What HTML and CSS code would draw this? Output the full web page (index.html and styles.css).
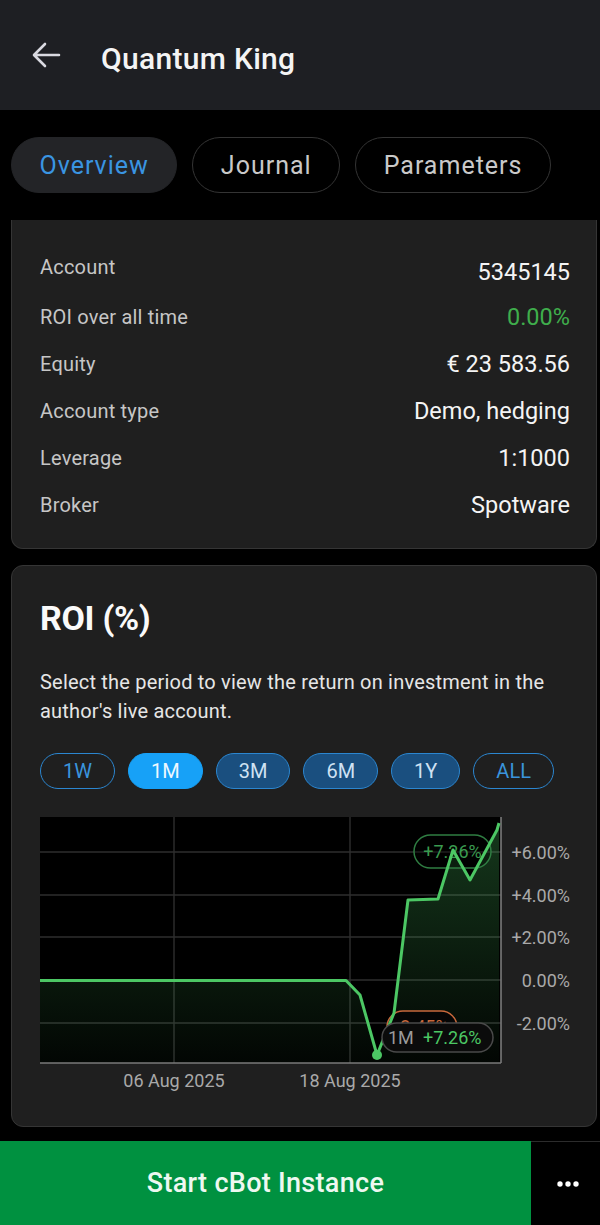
FILE: index.html
```html
<!DOCTYPE html>
<html lang="en">
<head>
    <meta charset="UTF-8">
    <meta name="viewport" content="width=device-width, initial-scale=1.0">
    <title>Quantum King</title>
    <link rel="stylesheet" href="styles.css">
</head>
<body>
    <div class="app">
        <header class="topbar">
            <svg class="back" width="30" height="30" viewBox="0 0 30 30">
                <path d="M28 15H4M14 4L3 15l11 11" fill="none" stroke="#d9d9e0" stroke-width="2.6" stroke-linecap="round" stroke-linejoin="round"/>
            </svg>
            <h1>Quantum King</h1>
        </header>

        <nav class="tabs">
            <span class="tab active">Overview</span>
            <span class="tab">Journal</span>
            <span class="tab">Parameters</span>
        </nav>

        <main class="content">
            <section class="card info">
                <div class="row first">
                    <span class="label">Account</span>
                    <span class="value">5345145</span>
                </div>
                <div class="row">
                    <span class="label">ROI over all time</span>
                    <span class="value green">0.00%</span>
                </div>
                <div class="row">
                    <span class="label">Equity</span>
                    <span class="value">€ 23 583.56</span>
                </div>
                <div class="row">
                    <span class="label">Account type</span>
                    <span class="value">Demo, hedging</span>
                </div>
                <div class="row">
                    <span class="label">Leverage</span>
                    <span class="value">1:1000</span>
                </div>
                <div class="row">
                    <span class="label">Broker</span>
                    <span class="value">Spotware</span>
                </div>
            </section>

            <section class="card roi">
                <h2>ROI (%)</h2>
                <p class="desc">Select the period to view the return on investment in the author's live account.</p>

                <div class="periods">
                    <span class="period">1W</span>
                    <span class="period current">1M</span>
                    <span class="period filled">3M</span>
                    <span class="period filled">6M</span>
                    <span class="period filled">1Y</span>
                    <span class="period">ALL</span>
                </div>

                <svg class="chart" width="532" height="280" viewBox="0 0 532 280">
                    <defs>
                        <linearGradient id="area" x1="0" y1="0" x2="0" y2="1">
                            <stop offset="0" stop-color="#4cc764" stop-opacity="0.28"/>
                            <stop offset="1" stop-color="#4cc764" stop-opacity="0.03"/>
                        </linearGradient>
                    </defs>
                    <rect x="0" y="0" width="461" height="246" fill="#000"/>
                    <!-- grid -->
                    <g stroke="#2e2e2e" stroke-width="1.4">
                        <line x1="0" y1="35" x2="461" y2="35"/>
                        <line x1="0" y1="78" x2="461" y2="78"/>
                        <line x1="0" y1="120" x2="461" y2="120"/>
                        <line x1="0" y1="163" x2="461" y2="163"/>
                        <line x1="0" y1="206" x2="461" y2="206"/>
                        <line x1="134" y1="0" x2="134" y2="246"/>
                        <line x1="310" y1="0" x2="310" y2="246"/>
                    </g>
                    <path d="M0 163.5 L306 163.5 L320 178 L337 238 L354 196 L368 83 L398 82 L413 33 L430 63 L457 13 L459 6 L459 246 L0 246 Z" fill="url(#area)"/>
                    <g stroke="#7a7a7a" stroke-width="1.6">
                        <line x1="461" y1="0" x2="461" y2="246"/>
                        <line x1="0" y1="246" x2="461" y2="246"/>
                    </g>

                    <!-- markers -->
                    <rect x="374" y="18" width="77" height="33" rx="16.5" fill="rgba(0,0,0,0.35)" stroke="#2f7d42" stroke-width="1.5"/>
                    <text x="412.5" y="40.5" class="badge-text dim-green" text-anchor="middle">+7.26%</text>
                    <rect x="347" y="194" width="70" height="32" rx="16" fill="#050505" stroke="#c8683c" stroke-width="1.5"/>
                    <text x="382" y="216" class="badge-text orange" text-anchor="middle">-3.45%</text>

                    <path d="M0 163.5 L306 163.5 L320 178 L337 238 L354 196 L368 83 L398 82 L413 33 L430 63 L457 13 L459 6" fill="none" stroke="#4cc764" stroke-width="3" stroke-linejoin="round"/>
                    <circle cx="337" cy="238" r="5" fill="#4cc764"/>

                    <rect x="342" y="206" width="111" height="29" rx="14.5" fill="#0b0b0b" stroke="#4a4a4a" stroke-width="1.5"/>
                    <text x="348" y="227" class="badge-text grey">1M</text>
                    <text x="383" y="227" class="badge-text green-t">+7.26%</text>

                    <!-- axes labels -->
                    <g class="axis" text-anchor="end">
                        <text x="530" y="41.5">+6.00%</text>
                        <text x="530" y="84.5">+4.00%</text>
                        <text x="530" y="126.5">+2.00%</text>
                        <text x="530" y="169.5">0.00%</text>
                        <text x="530" y="212.5">-2.00%</text>
                    </g>
                    <g class="axis" text-anchor="middle">
                        <text x="134" y="269.5">06 Aug 2025</text>
                        <text x="310" y="269.5">18 Aug 2025</text>
                    </g>
                </svg>
            </section>
        </main>

        <footer class="actions">
            <button type="button" class="start">Start cBot Instance</button>
            <button type="button" class="more" aria-label="More">
                <svg width="24" height="8" viewBox="0 0 24 8">
                    <circle cx="4" cy="4" r="2.7" fill="#fff"/>
                    <circle cx="12" cy="4" r="2.7" fill="#fff"/>
                    <circle cx="20" cy="4" r="2.7" fill="#fff"/>
                </svg>
            </button>
        </footer>
    </div>
</body>
</html>
```

FILE: styles.css
```css
* {
    box-sizing: border-box;
}
body {
    margin: 0;
    background-color: #000;
    font-family: Roboto, "Noto Sans", sans-serif;
    color: #f2f2f2;
}
.app {
    width: 600px;
    height: 1225px;
    overflow: hidden;
    display: flex;
    flex-direction: column;
}

/* header */
.topbar {
    height: 110px;
    flex-shrink: 0;
    display: flex;
    align-items: center;
    padding: 6px 0 0 31px;
    background-color: #1e1f23;
}
.back {
    margin-bottom: 6px;
}
.topbar h1 {
    margin: 0 0 0 40px;
    font-size: 30px;
    font-weight: 500;
    letter-spacing: 0.3px;
    color: #f4f4f4;
}

/* tabs */
.tabs {
    height: 110px;
    flex-shrink: 0;
    display: flex;
    gap: 15px;
    padding: 27px 11px;
}
.tab {
    display: flex;
    align-items: center;
    height: 56px;
    padding: 0 27.5px;
    border: 1.5px solid #343434;
    border-radius: 28px;
    font-size: 25px;
    letter-spacing: 1px;
    color: #c9c9c9;
}
.tab.active {
    background-color: #232427;
    border-color: #232427;
    color: #3a95e2;
}

/* cards */
.content {
    display: flex;
    flex-direction: column;
    gap: 16px;
    margin: 0 3px 0 11px;
}
.card {
    background-color: #1f1f1f;
    border: 1px solid #353535;
    border-radius: 12px;
}
.info {
    height: 329px;
    padding: 24px 26px 0 28px;
    border-top: none;
    border-radius: 0 0 12px 12px;
}
.row {
    display: flex;
    justify-content: space-between;
    align-items: flex-start;
    height: 47px;
    line-height: 47px;
}
.row.first {
    height: 50px;
}
.row.first .value {
    padding-top: 5px;
}
.label {
    font-size: 20px;
    letter-spacing: 0.2px;
    color: #c6c6c6;
}
.value {
    font-size: 23.5px;
    color: #f4f4f4;
}
.value.green {
    color: #3fae4c;
}

/* roi card */
.roi {
    height: 562px;
    padding: 32px 26px 0 28px;
}
.roi h2 {
    margin: 0;
    font-size: 34px;
    line-height: 41px;
    font-weight: 700;
    letter-spacing: -0.3px;
    color: #fafafa;
}
.desc {
    margin: 29px 0 0;
    font-size: 20px;
    line-height: 29px;
    letter-spacing: 0.2px;
    color: #e6e6e6;
}
.periods {
    display: flex;
    gap: 13px;
    margin-top: 27px;
}
.period {
    display: flex;
    align-items: center;
    height: 36px;
    padding: 0 22px;
    border: 1.5px solid #2b86d0;
    border-radius: 18px;
    font-size: 20px;
    color: #3a94dc;
}
.period.filled {
    background-color: #1a4f7f;
    color: #cfe2f3;
}
.period.current {
    background-color: #17a1f7;
    border-color: #17a1f7;
    color: #eef8ff;
}
.chart {
    display: block;
    margin-top: 28px;
}
.axis text {
    font-family: Roboto, sans-serif;
    font-size: 18px;
    fill: #a9a9a9;
}
.badge-text {
    font-family: Roboto, sans-serif;
    font-size: 18px;
}
.dim-green {
    fill: #3a9a4f;
}
.orange {
    fill: #c8683c;
}
.grey {
    fill: #9a9a9a;
}
.green-t {
    fill: #4cc764;
}

/* bottom actions */
.actions {
    margin-top: auto;
    height: 84px;
    display: flex;
}
.actions button {
    border: none;
    font-family: Roboto, sans-serif;
    cursor: pointer;
}
.start {
    width: 531px;
    background-color: #009140;
    color: #eef8f1;
    font-size: 27px;
    font-weight: 500;
    letter-spacing: 0.3px;
}
.more {
    flex: 1;
    background-color: #000;
    border-top: 1px solid #2c2c2c !important;
    display: flex;
    align-items: center;
    justify-content: center;
    padding: 0 0 0 4px;
}
```
